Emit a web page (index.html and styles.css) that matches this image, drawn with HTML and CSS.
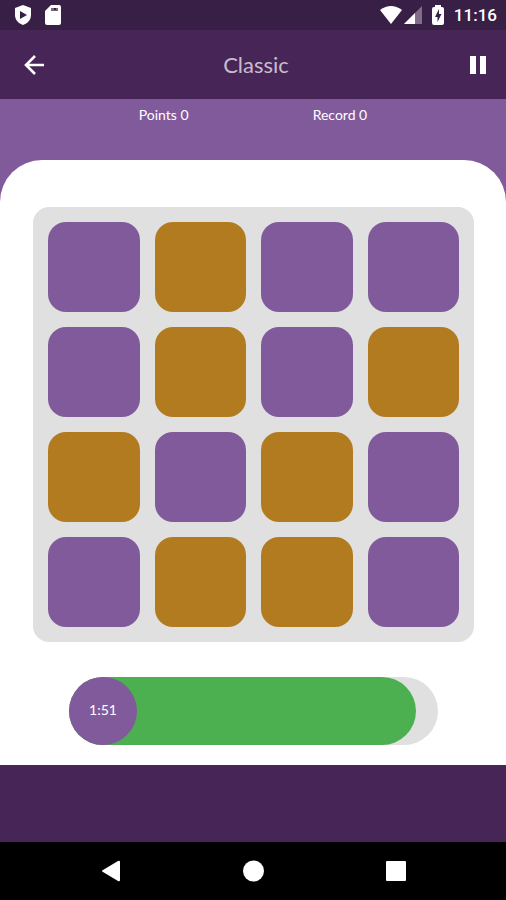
FILE: index.html
```html
<!DOCTYPE html>
<html lang="en">
<head>
<meta charset="utf-8">
<meta name="viewport" content="width=device-width, initial-scale=1">
<title>Classic</title>
<link rel="stylesheet" href="styles.css">
</head>
<body>
<div class="status">
  <svg class="status-icon" viewBox="0 0 20 20" aria-hidden="true"><path fill="#fff" d="M10 0 18 3V10C18 15 14.500 18.500 10 20 5.500 18.500 2 15 2 10V3Z"/><path fill="#381f45" d="M7 6v8l7-4z"/></svg>
  <svg class="status-icon" viewBox="0 0 20 20" aria-hidden="true"><path fill="#fff" d="M8 0H16Q18 0 18 2V18Q18 20 16 20H4Q2 20 2 18V6Z"/><path fill="#77677f" d="M8 3h7v3H8z"/><path fill="#381f45" d="M11 3h2v2h-2z"/></svg>
  <span class="spacer"></span>
  <div class="signals">
    <svg class="wifi" viewBox="0 0 22 18" aria-hidden="true"><path fill="#fff" d="M0 4Q11-4 22 4L11 18Z"/></svg>
    <svg class="cell" viewBox="0 0 18 18" aria-hidden="true"><path fill="#806d89" d="M18 0V18H0Z"/><path fill="#fff" d="M11 7V18H0Z"/></svg>
    <svg class="battery" viewBox="0 0 12 20" aria-hidden="true"><path fill="#fff" d="M3 2V0H9V2H10Q12 2 12 4V18Q12 20 10 20H2Q0 20 0 18V4Q0 2 2 2Z"/><path fill="#381f45" d="M7 4 3 12H5.500V17L9.500 9H7Z"/></svg>
  </div>
  <time class="clock">11:16</time>
</div>
<header class="appbar">
  <button class="icon-button" type="button" aria-label="Back"><svg viewBox="0 0 24 24"><path fill="none" stroke="#fff" stroke-width="2.600" d="M22 12H4M13 3 4 12 13 21"/></svg></button>
  <h1 class="title">Classic</h1>
  <button class="icon-button" type="button" aria-label="Pause"><svg viewBox="0 0 24 24"><path fill="#fff" d="M4 3h6v18H4zm10 0h6v18h-6z"/></svg></button>
</header>
<main class="game">
  <div class="scores">
    <span>Points 0</span>
    <span>Record 0</span>
  </div>
  <section class="panel">
    <div class="board">
      <button class="tile" type="button" aria-label="Purple"></button>
      <button class="tile gold" type="button" aria-label="Gold"></button>
      <button class="tile" type="button" aria-label="Purple"></button>
      <button class="tile" type="button" aria-label="Purple"></button>
      <button class="tile" type="button" aria-label="Purple"></button>
      <button class="tile gold" type="button" aria-label="Gold"></button>
      <button class="tile" type="button" aria-label="Purple"></button>
      <button class="tile gold" type="button" aria-label="Gold"></button>
      <button class="tile gold" type="button" aria-label="Gold"></button>
      <button class="tile" type="button" aria-label="Purple"></button>
      <button class="tile gold" type="button" aria-label="Gold"></button>
      <button class="tile" type="button" aria-label="Purple"></button>
      <button class="tile" type="button" aria-label="Purple"></button>
      <button class="tile gold" type="button" aria-label="Gold"></button>
      <button class="tile gold" type="button" aria-label="Gold"></button>
      <button class="tile" type="button" aria-label="Purple"></button>
    </div>
    <div class="timer">
      <div class="timer-fill" style="width: 94%"><span class="timer-value">1:51</span></div>
    </div>
  </section>
</main>
<nav class="navbar">
  <button class="nav-button" type="button" aria-label="Back"><svg viewBox="0 0 24 24"><path fill="#fff" d="M21 3V21Q21 23 19 22L4 13Q2 12 4 11L19 2Q21 1 21 3Z"/></svg></button>
  <button class="nav-button" type="button" aria-label="Home"><svg viewBox="0 0 24 24"><circle cx="12.500" cy="12" r="10.500" fill="#fff"/></svg></button>
  <button class="nav-button" type="button" aria-label="Recent apps"><svg viewBox="0 0 24 24"><rect x="3" y="2" width="20" height="20" rx="1" fill="#fff"/></svg></button>
</nav>
</body>
</html>
```
FILE: styles.css
```css
* {
  box-sizing: border-box;
}

body {
  margin: 0;
  min-height: 100vh;
  display: flex;
  flex-direction: column;
  background: #472657;
  color: #fff;
  font-family: Lato, "Liberation Sans", sans-serif;
}

button {
  border: 0;
  padding: 0;
  background: none;
}

svg {
  display: block;
}

.status {
  display: flex;
  align-items: center;
  gap: 10px;
  height: 30px;
  padding: 0 9px 0 13px;
  background: #381f45;
}

.status-icon {
  width: 20px;
  height: 20px;
}

.spacer {
  flex: 1;
}

.signals {
  display: flex;
  align-items: center;
  gap: 10px;
}

.wifi {
  width: 22px;
  height: 18px;
  margin-right: -8px;
}

.cell {
  width: 18px;
  height: 18px;
}

.battery {
  width: 12px;
  height: 20px;
}

.clock {
  font: 500 17px/32px Roboto, sans-serif;
}

.appbar {
  display: flex;
  align-items: center;
  justify-content: space-between;
  height: 69px;
  padding: 0 16px 0 22px;
}

.icon-button,
.icon-button svg {
  width: 24px;
  height: 24px;
}

.title {
  margin: 0;
  color: #c8bccd;
  font-size: 22px;
  font-weight: 400;
  line-height: 32px;
}

.game {
  background: #805a9a;
}

.scores {
  display: flex;
  justify-content: center;
  gap: 124px;
  height: 61px;
  padding-top: 4px;
  font-size: 14px;
  line-height: 24px;
}

.panel {
  padding: 47px 32px 20px 33px;
  border-radius: 42px 42px 0 0;
  background: #fff;
}

.board {
  display: grid;
  grid-template-columns: repeat(4, 1fr);
  grid-auto-rows: 90px;
  gap: 15px;
  padding: 15px;
  border-radius: 16px;
  background: #e0e0e0;
}

.tile {
  border-radius: 18px;
  background: #805a9a;
}

.gold {
  background: #b37b20;
}

.timer {
  margin: 35px 36px 0;
  border-radius: 34px;
  background: #e0e0e0;
}

.timer-fill {
  border-radius: 34px;
  background: #4caf50;
}

.timer-value {
  display: block;
  width: 68px;
  height: 68px;
  border-radius: 50%;
  background: #805a9a;
  font-size: 14px;
  line-height: 66px;
  text-align: center;
}

.navbar {
  display: flex;
  justify-content: center;
  gap: 118px;
  height: 58px;
  margin-top: auto;
  align-items: center;
  background: #000;
}

.nav-button,
.nav-button svg {
  width: 24px;
  height: 24px;
}
```
